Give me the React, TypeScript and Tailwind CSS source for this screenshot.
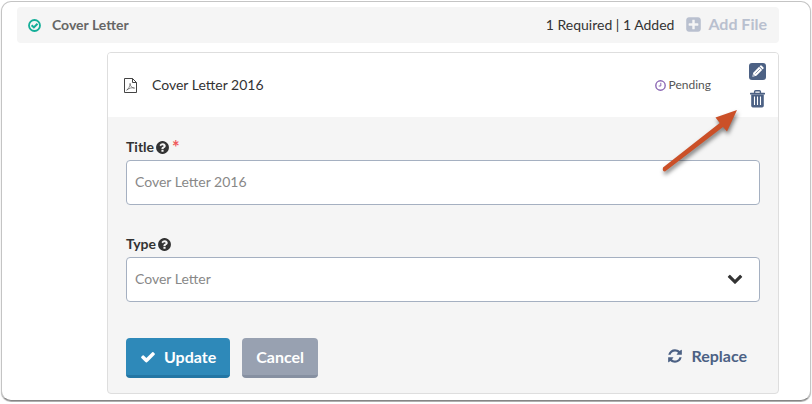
import type { ReactNode } from "react";

function Glyph({ d, className }: { d: string; className: string }) {
  return (
    <svg viewBox="0 0 1792 1792" fill="currentColor" aria-hidden="true" className={`shrink-0 ${className}`}>
      <path d={d} />
    </svg>
  );
}

const REFRESH =
  "M1639 1056q0 5-1 7-64 268-268 434.5t-478 166.5q-146 0-282.5-55t-243.5-157l-129 129q-19 19-45 19t-45-19-19-45v-448q0-26 19-45t45-19h448q26 0 45 19t19 45-19 45l-137 137q71 66 161 102t187 36q134 0 250-65t186-179q11-17 53-117 8-23 30-23h192q13 0 22.5 9.5t9.5 22.5zm25-800v448q0 26-19 45t-45 19h-448q-26 0-45-19t-19-45 19-45l138-138q-148-137-349-137-134 0-250 65t-186 179q-11 17-53 117-8 23-30 23h-199q-13 0-22.5-9.5t-9.5-22.5v-7q65-268 270-434.5t480-166.5q146 0 284 55.5t245 156.5l130-129q19-19 45-19t45 19 19 45z";
const CHECK =
  "M1671 566q0 40-28 68l-724 724-136 136q-28 28-68 28t-68-28l-136-136-362-362q-28-28-28-68t28-68l136-136q28-28 68-28t68 28l294 295 656-657q28-28 68-28t68 28l136 136q28 28 28 68z";
const QUESTION =
  "M1024 1376v-192q0-14-9-23t-23-9h-192q-14 0-23 9t-9 23v192q0 14 9 23t23 9h192q14 0 23-9t9-23zm256-672q0-88-55.5-163t-138.5-116-170-41q-243 0-371 213-15 24 8 42l132 100q7 6 19 6 16 0 25-12 53-68 86-92 34-24 86-24 48 0 85.5 26t37.5 59q0 38-20 61t-68 45q-63 28-115.5 86.5t-52.5 125.5v36q0 14 9 23t23 9h192q14 0 23-9t9-23q0-19 21.5-49.5t54.5-49.5q32-18 49-28.5t46-35 44.5-48 28-60.5 12.5-81zm384 192q0 209-103 385.5t-279.5 279.5-385.5 103-385.5-103-279.5-279.5-103-385.5 103-385.5 279.5-279.5 385.5-103 385.5 103 279.5 279.5 103 385.5z";
const CHEVRON =
  "M1683 808l-742 741q-19 19-45 19t-45-19l-742-741q-19-19-19-45.5t19-45.5l166-165q19-19 45-19t45 19l531 531 531-531q19-19 45-19t45 19l166 165q19 19 19 45.5t-19 45.5z";
const PLUS_SQUARE =
  "M1408 960v-128q0-26-19-45t-45-19h-320v-320q0-26-19-45t-45-19h-128q-26 0-45 19t-19 45v320h-320q-26 0-45 19t-19 45v128q0 26 19 45t45 19h320v320q0 26 19 45t45 19h128q26 0 45-19t19-45v-320h320q26 0 45-19t19-45zm256-544v960q0 119-84.5 203.5t-203.5 84.5h-960q-119 0-203.5-84.5t-84.5-203.5v-960q0-119 84.5-203.5t203.5-84.5h960q119 0 203.5 84.5t84.5 203.5z";

function DoneIcon() {
  return (
    <svg viewBox="0 0 13 13" fill="none" stroke="currentColor" aria-hidden="true" className="size-[13px] shrink-0 text-[#13ae98]">
      <circle cx="6.5" cy="6.5" r="5.5" strokeWidth="1.8" />
      <path d="M3.6 6.2 5.9 8.4 9.5 4.8" strokeWidth="2.1" />
    </svg>
  );
}

function PdfIcon() {
  return (
    <svg viewBox="0 0 13 15" fill="none" stroke="currentColor" aria-hidden="true" className="h-[15px] w-[13px] shrink-0 text-[#444]">
      <path d="M.5 .5H8.5L12.5 4.5V14.5H.5Z" strokeWidth="1" />
      <path d="M8.5 .5V4.5H12.5" strokeWidth="1" />
      <path d="M2.6 12.2C4.5 11.2 6.1 7.9 6.1 5.4C6.1 8.2 8.2 10.3 10.6 10.1C8.2 9.2 5.2 10 2.6 12.2Z" strokeWidth=".6" />
    </svg>
  );
}

function ClockIcon() {
  return (
    <svg viewBox="0 0 11 11" fill="none" stroke="currentColor" aria-hidden="true" className="size-[11px] shrink-0 text-[#8c68b4]">
      <circle cx="5.5" cy="5.5" r="4.7" strokeWidth="1.4" />
      <path d="M5.8 2.8V6H3.7" strokeWidth="1" />
    </svg>
  );
}

function EditIcon() {
  return (
    <svg viewBox="0 0 17 17" aria-hidden="true" className="size-[17px]">
      <rect width="17" height="17" rx="3" fill="#4c6184" />
      <g transform="rotate(45 8.5 8.5)" fill="#fff">
        <path d="M6.3 3.4V2.5Q6.3 1.4 7.4 1.4H9.6Q10.7 1.4 10.7 2.5V3.4Z" />
        <path d="M6.3 4.1H10.7V12.3L8.5 15.8L6.3 12.3Z" />
        <path d="M8.5 5V11.6" stroke="#4c6184" strokeWidth=".6" />
        <path d="M7.7 13.2H9.3L8.5 14.6Z" fill="#4c6184" />
      </g>
    </svg>
  );
}

function TrashIcon() {
  return (
    <svg viewBox="0 0 15 18" fill="#4c6184" aria-hidden="true" className="h-[18px] w-[15px]">
      <path d="M4.6 3V1.8Q4.6 .8 5.6 .8H9.4Q10.4 .8 10.4 1.8V3" fill="none" stroke="#4c6184" strokeWidth="1.4" />
      <rect y="2.8" width="15" height="1.7" rx=".5" />
      <path d="M1.2 4.5H13.8V15.8Q13.8 17.5 12.1 17.5H2.9Q1.2 17.5 1.2 15.8Z" />
      <path d="M4.5 6.4V15M7.5 6.4V15M10.5 6.4V15" stroke="#fff" strokeWidth="1.1" />
    </svg>
  );
}

function Label({ htmlFor, required, children }: { htmlFor: string; required?: boolean; children: ReactNode }) {
  return (
    <label htmlFor={htmlFor} className="mb-[3px] flex h-5 items-center text-sm font-bold text-[#333]">
      {children}
      <Glyph d={QUESTION} className="ml-px size-[15px]" />
      {required && <span className="ml-[2px] self-start text-lg leading-5 text-[#f0595c]">*</span>}
    </label>
  );
}

const FIELD =
  "block h-[45px] w-full appearance-none rounded border border-[#a5b0c1] bg-white px-2 pb-[2px] text-sm text-[#888] outline-none";

export default function App() {
  return (
    <main className="p-px font-['Lato','Liberation_Sans',sans-serif] text-sm text-[#333]">
      <section className="relative rounded-[10px] border border-[#c4c4c4] border-b-[#858585] bg-white pt-[5px] pr-[31px] pb-[6px] pl-[15px] shadow-[0_1px_1px_rgba(0,0,0,0.35)]">
        <header className="flex h-9 items-center rounded bg-[#f5f5f5] pr-3 pl-[11px]">
          <DoneIcon />
          <h1 className="ml-[11px] font-bold text-[#666]">Cover Letter</h1>
          <span className="ml-auto">1 Required | 1 Added</span>
          <button type="button" className="ml-[11px] flex items-center gap-[6px] pb-[2px] text-base font-bold text-[#b9c0cf]">
            <Glyph d={PLUS_SQUARE} className="size-[17px]" />
            Add File
          </button>
        </header>

        <article className="mt-[9px] ml-[90px] overflow-hidden rounded border border-[#dedede] bg-[#f5f5f5]">
          <div className="flex h-16 items-center bg-white pr-3 pl-4">
            <PdfIcon />
            <h2 className="ml-[15px]">Cover Letter 2016</h2>
            <span className="ml-auto flex items-center gap-[3px] text-xs text-[#555]">
              <ClockIcon />
              Pending
            </span>
            <div className="ml-[38px] flex flex-col items-center gap-[10px]">
              <button type="button" aria-label="Edit">
                <EditIcon />
              </button>
              <button type="button" aria-label="Delete">
                <TrashIcon />
              </button>
            </div>
          </div>

          <form className="px-[18px] pt-5 pb-[15px]" onSubmit={(e) => e.preventDefault()}>
            <Label htmlFor="title" required>
              Title
            </Label>
            <input id="title" type="text" defaultValue="Cover Letter 2016" className={FIELD} />

            <div className="mt-[29px]">
              <Label htmlFor="type">Type</Label>
              <div className="relative">
                <select id="type" className={FIELD}>
                  <option>Cover Letter</option>
                </select>
                <Glyph d={CHEVRON} className="pointer-events-none absolute top-[13px] right-[17px] size-4 text-[#333]" />
              </div>
            </div>

            <div className="mt-9 flex items-start gap-3 text-base font-bold">
              <button type="submit" className="flex h-10 items-center gap-2 rounded border-b-[3px] border-[#2376a4] bg-[#2e89b9] px-[14px] text-white">
                <Glyph d={CHECK} className="size-4" />
                Update
              </button>
              <button type="button" className="h-10 rounded border-b-[3px] border-[#8690a1] bg-[#98a1b1] px-[14px] text-white">
                Cancel
              </button>
              <button type="button" className="mr-[13px] ml-auto flex h-9 items-center gap-2 text-[#4c6184]">
                <Glyph d={REFRESH} className="size-4" />
                Replace
              </button>
            </div>
          </form>
        </article>

        <svg viewBox="0 0 90 76" aria-hidden="true" className="pointer-events-none absolute top-[104px] right-[66px] h-[76px] w-[90px] drop-shadow-[1px_3px_2px_rgba(0,0,0,0.5)]">
          <path d="M83 4L61.5 11.5L65.7 17L9 61.5Q8 65.5 11 65.5L69 21L73 25.5Z" fill="#cb5028" />
        </svg>
      </section>
    </main>
  );
}
